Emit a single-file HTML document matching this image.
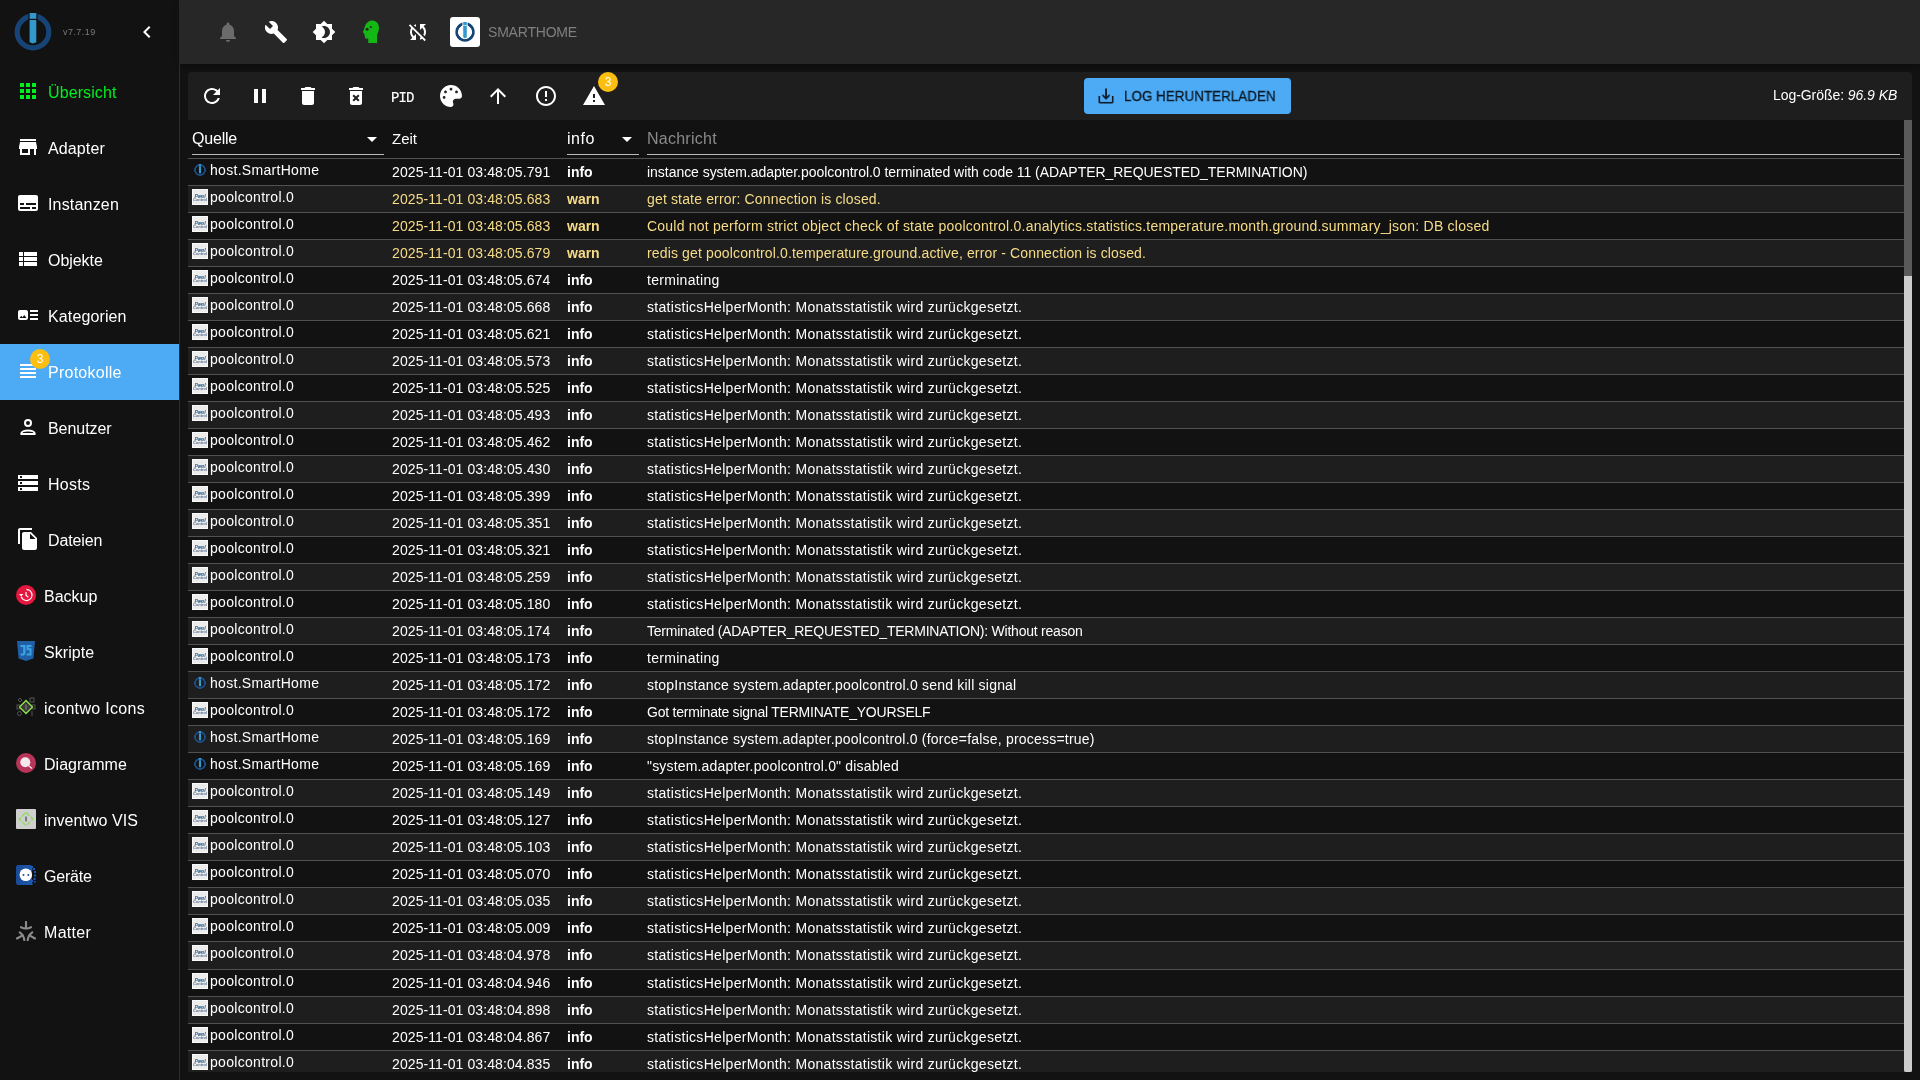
<!DOCTYPE html><html><head><meta charset="utf-8"><style>
*{box-sizing:border-box;margin:0;padding:0}
html,body{width:1920px;height:1080px;overflow:hidden;background:#121212;font-family:"Liberation Sans",sans-serif;color:#fff}
.abs{position:absolute}
#side{position:absolute;left:0;top:0;width:180px;height:1080px;background:#121212;border-right:1px solid #2e2e2e}
.item{position:absolute;left:0;width:179px;height:56px}
.item .ic{position:absolute;left:16px;top:15px;width:24px;height:24px}
.item .tx{position:absolute;left:48px;top:19px;font-size:16px;line-height:20px;white-space:nowrap}
.item.sel{background:#4dabf5}
#top{position:absolute;left:180px;top:0;width:1740px;height:64px;background:#272727;box-shadow:0 2px 4px -1px rgba(0,0,0,.2),0 4px 5px 0 rgba(0,0,0,.14),0 1px 10px 0 rgba(0,0,0,.12)}
.tb{position:absolute;top:20px;width:24px;height:24px}
#panel{position:absolute;left:188px;top:72px;width:1724px;height:1000px;background:#121212;overflow:hidden}
#toolbar{position:absolute;left:0;top:0;width:1724px;height:48px;background:#1e1e1e;border-radius:4px 4px 0 0}
.ti{position:absolute;top:12px;width:24px;height:24px}
#thead{position:absolute;left:0;top:48px;width:1716px;height:39px;border-bottom:1px solid #515151;background:#121212}
.hl{position:absolute;top:9px;font-size:16px;line-height:20px;white-space:nowrap}
.ul{position:absolute;top:34px;height:1px;background:#bababa}
.row{position:absolute;left:0;width:1716px;height:27px;border-bottom:1px solid #515151}
.row.e{background:#1e1e1e}
.c{position:absolute;font-size:14px;line-height:16px;white-space:nowrap}
.src{left:22px;top:3px;letter-spacing:0.3px}
.tm{left:204px;top:5px;letter-spacing:0.09px}
.lv{left:379px;top:5px;font-weight:bold}
.msg{left:459px;top:5px}
.w{color:#f7dc87}
.pi{position:absolute;left:4px;top:3px;width:16px;height:16px}
.hi{position:absolute;left:6px;top:5px;width:12px;height:12px}
svg{display:block}
body *{will-change:transform}
#sb{position:absolute;left:1716px;top:48px;width:8px;height:952px;background:#5a5a5a}
#thumb{position:absolute;left:0;top:156px;width:8px;height:796px;background:#cdcdcd;border-radius:0 0 2px 2px}
</style></head><body>
<div id="side">
<div class="abs" style="left:14px;top:13px;width:38px;height:38px"><svg width="38" height="38" viewBox="0 0 38 38"><circle cx="19" cy="19" r="15.8" fill="none" stroke="#164477" stroke-width="5.2"/><rect x="14.4" y="-1" width="9.2" height="10" fill="#121212"/><rect x="15.6" y="0" width="6.7" height="5.8" fill="#3399cc"/><path d="M15.6 7h6.7v22.2l-3.35 1.3-3.35-1.3z" fill="#3399cc"/></svg></div>
<div class="abs" style="left:63px;top:27px;font-size:9px;line-height:10px;letter-spacing:0.45px;color:#7a7a7a">v7.7.19</div>
<div class="abs" style="left:135px;top:20px"><svg width="24" height="24" viewBox="0 0 24 24" ><path fill="#fff" d="M15.41 7.41L14 6l-6 6 6 6 1.41-1.41L10.83 12z"/></svg></div>
<div class="item" style="top:64px"><div class="ic"><svg width="24" height="24" viewBox="0 0 24 24" ><path fill="#00f01e" d="M4 8h4V4H4v4zm6 12h4v-4h-4v4zm-6 0h4v-4H4v4zm0-6h4v-4H4v4zm6 0h4v-4h-4v4zm6-10v4h4V4h-4zm-6 4h4V4h-4v4zm6 6h4v-4h-4v4zm0 6h4v-4h-4v4z"/></svg></div><div class="tx" style="color:#00f01e;letter-spacing:0.1px">Übersicht</div>
</div>
<div class="item" style="top:120px"><div class="ic"><svg width="24" height="24" viewBox="0 0 24 24" ><path fill="#fff" d="M20 4H4v2h16V4zm1 10v-2l-1-5H4l-1 5v2h1v6h10v-6h4v6h2v-6h1zm-9 4H6v-4h6v4z"/></svg></div><div class="tx" style="color:#fff;letter-spacing:0.117px">Adapter</div>
</div>
<div class="item" style="top:176px"><div class="ic"><svg width="24" height="24" viewBox="0 0 24 24" ><path fill="#fff" d="M20 4H4c-1.1 0-2 .9-2 2v12c0 1.1.9 2 2 2h16c1.1 0 2-.9 2-2V6c0-1.1-.9-2-2-2zM4 12h4v2H4v-2zm10 6H4v-2h10v2zm6 0h-4v-2h4v2zm0-4H10v-2h10v2z"/></svg></div><div class="tx" style="color:#fff;letter-spacing:0.175px">Instanzen</div>
</div>
<div class="item" style="top:232px"><div class="ic"><svg width="24" height="24" viewBox="0 0 24 24" ><path fill="#fff" d="M3 14h4v-4H3v4zm0 5h4v-4H3v4zM3 9h4V5H3v4zm5 5h13v-4H8v4zm0 5h13v-4H8v4zM8 5v4h13V5H8z"/></svg></div><div class="tx" style="color:#fff;letter-spacing:-0.05px">Objekte</div>
</div>
<div class="item" style="top:288px"><div class="ic"><svg width="24" height="24" viewBox="0 0 24 24" ><path fill="#fff" d="M22 13h-8v-2h8v2zm0-6h-8v2h8V7zm-8 10h8v-2h-8v2zm-2-8v6c0 1.1-.9 2-2 2H4c-1.1 0-2-.9-2-2V9c0-1.1.9-2 2-2h6c1.1 0 2 .9 2 2zm-1.5 6l-2.25-3-1.75 2.26-1.25-1.51L3.5 15h7z"/></svg></div><div class="tx" style="color:#fff;letter-spacing:0.122px">Kategorien</div>
</div>
<div class="item sel" style="top:344px"><div class="ic"><svg width="24" height="24" viewBox="0 0 24 24" ><path fill="#fff" d="M4 15h16v-2H4v2zm0 4h16v-2H4v2zm0-8h16V9H4v2zm0-6v2h16V5H4z"/></svg></div><div class="tx" style="color:#fff;letter-spacing:0.256px">Protokolle</div>
<div class="abs" style="left:30px;top:5px;width:20px;height:20px;border-radius:10px;background:#fdbf0f;color:#fff;font-size:12px;line-height:20px;text-align:center">3</div>
</div>
<div class="item" style="top:400px"><div class="ic"><svg width="24" height="24" viewBox="0 0 24 24"><circle cx="12" cy="8" r="3" fill="none" stroke="#fff" stroke-width="2"/><path d="M5.2 19C5.2 16.9 8.5 15.6 12 15.6S18.8 16.9 18.8 19Z" fill="none" stroke="#fff" stroke-width="2" stroke-linejoin="round"/></svg></div><div class="tx" style="color:#fff;letter-spacing:-0.057px">Benutzer</div>
</div>
<div class="item" style="top:456px"><div class="ic"><svg width="24" height="24" viewBox="0 0 24 24" ><path fill="#fff" d="M2 20h20v-4H2v4zm2-3h2v2H4v-2zM2 4v4h20V4H2zm4 3H4V5h2v2zm-4 7h20v-4H2v4zm2-3h2v2H4v-2z"/></svg></div><div class="tx" style="color:#fff;letter-spacing:0.3px">Hosts</div>
</div>
<div class="item" style="top:512px"><div class="ic"><svg width="24" height="24" viewBox="0 0 24 24" ><path fill="#fff" d="M16 1H4c-1.1 0-2 .9-2 2v14h2V3h12V1zm-1 4l6 6v10c0 1.1-.9 2-2 2H7.99C6.89 23 6 22.1 6 21l.01-14c0-1.1.89-2 1.99-2h7zm-1 7h5.5L14 6.5V12z"/></svg></div><div class="tx" style="color:#fff;letter-spacing:-0.133px">Dateien</div>
</div>
<div class="item" style="top:568px"><div class="abs" style="left:16px;top:17px"><svg width="20" height="20" viewBox="0 0 20 20"><circle cx="10" cy="10" r="10" fill="#e5173f"/><path d="M10.5 4.5a5.5 5.5 0 1 1-5.2 7.3" fill="none" stroke="#fff" stroke-width="1.3"/><path d="M3 9l2.2 2.6L7.4 9z" fill="#fff"/><path d="M10 7v3.3l2.3 2" fill="none" stroke="#fff" stroke-width="1.2"/></svg></div><div class="tx" style="left:44px;color:#fff;letter-spacing:0.0px">Backup</div></div>
<div class="item" style="top:624px"><div class="abs" style="left:17px;top:17px"><svg width="18" height="20" viewBox="0 0 18 20"><path d="M0 0h18l-1.6 17.6L9 20l-7.4-2.4z" fill="#1f5fa6"/><path d="M3.5 4h5v8.5l-1.5 2H3.6v-2h2.6V6H3.5z" fill="#3ea3e2"/><path d="M14.5 4H9.6v5.2h3v3.3H9.6v2h4.6l.3-.5V7.3h-2.8V6h2.8z" fill="#3ea3e2"/></svg></div><div class="tx" style="left:44px;color:#fff;letter-spacing:0.067px">Skripte</div></div>
<div class="item" style="top:680px"><div class="abs" style="left:16px;top:17px"><svg width="20" height="20" viewBox="0 0 20 20"><g fill="none" stroke="#555" stroke-width="1"><path d="M2 3l2-2 2 2-2 2z"/><rect x="14" y="1" width="4" height="4"/><circle cx="3.5" cy="16.5" r="2"/><path d="M16 14v5"/><rect x="1" y="8" width="3" height="4"/><rect x="16" y="8" width="3" height="4"/></g><path d="M10 3.5l6.5 6.5-6.5 6.5-6.5-6.5z" fill="#3a3a3a" stroke="#8fe84a" stroke-width="1.3"/><rect x="9.3" y="7.5" width="1.4" height="5" fill="#777"/></svg></div><div class="tx" style="left:44px;color:#fff;letter-spacing:0.317px">icontwo Icons</div></div>
<div class="item" style="top:736px"><div class="abs" style="left:16px;top:17px"><svg width="20" height="20" viewBox="0 0 20 20"><circle cx="10" cy="10" r="10" fill="#b73558"/><circle cx="9.3" cy="9.3" r="5" fill="#f4e9ec"/><path d="M12.5 12.5l3.5 3" stroke="#f4e9ec" stroke-width="1.2"/></svg></div><div class="tx" style="left:44px;color:#fff;letter-spacing:0.012px">Diagramme</div></div>
<div class="item" style="top:792px"><div class="abs" style="left:16px;top:17px"><svg width="20" height="20" viewBox="0 0 20 20"><rect x="0" y="0" width="20" height="20" rx="1" fill="#cfcfcf"/><path d="M10 3.2l6.8 6.8-6.8 6.8-6.8-6.8z" fill="none" stroke="#8edb5a" stroke-width="1.3" stroke-dasharray="5 1.5"/><rect x="9.4" y="7.6" width="1.2" height="4.8" fill="#444"/></svg></div><div class="tx" style="left:44px;color:#fff;letter-spacing:0.045px">inventwo VIS</div></div>
<div class="item" style="top:848px"><div class="abs" style="left:16px;top:17px"><svg width="20" height="20" viewBox="0 0 20 20"><defs><linearGradient id="gd" x1="0" x2="1"><stop offset="0" stop-color="#1a4a94"/><stop offset="1" stop-color="#1d58b0"/></linearGradient></defs><rect x="0" y="0" width="16" height="20" rx="2" fill="url(#gd)"/><g fill="#1b5cc0"><rect x="15" y="1" width="2" height="2"/><rect x="17" y="3" width="2" height="2"/><rect x="15" y="4" width="1.5" height="1.5"/><rect x="18" y="6" width="2" height="2"/><rect x="18" y="9.5" width="2" height="2"/><rect x="17.5" y="13" width="2" height="2"/><rect x="15" y="15" width="2" height="2"/><rect x="18" y="16" width="1.6" height="1.6"/><rect x="14.5" y="18" width="2" height="2"/></g><circle cx="9.8" cy="9.8" r="6.3" fill="#fff"/><circle cx="7.5" cy="10" r="1" fill="#1d4f9e"/><circle cx="12.3" cy="10" r="1" fill="#1d4f9e"/></svg></div><div class="tx" style="left:44px;color:#fff;letter-spacing:-0.22px">Geräte</div></div>
<div class="item" style="top:904px"><div class="abs" style="left:16px;top:17px"><svg width="20" height="20" viewBox="0 0 20 20"><g fill="none" stroke="#8c8c8c" stroke-width="2.1" stroke-linecap="round"><path d="M10 0.8v6.5"/><path d="M5 6.2q5 2.6 10 0"/><path d="M1 17.5l5.6-3.2"/><path d="M8.3 19.5q-0.3-5.4-4.6-8.2"/><path d="M19 17.5l-5.6-3.2"/><path d="M11.7 19.5q0.3-5.4 4.6-8.2"/></g></svg></div><div class="tx" style="left:44px;color:#fff;letter-spacing:0.3px">Matter</div></div>
</div>
<div id="top">
<div class="tb" style="left:36px"><svg width="24" height="24" viewBox="0 0 24 24" ><path fill="#6b6b6b" d="M12 22c1.1 0 2-.9 2-2h-4c0 1.1.89 2 2 2zm6-6v-5c0-3.07-1.64-5.64-4.5-6.32V4c0-.83-.67-1.5-1.5-1.5s-1.5.67-1.5 1.5v.68C7.63 5.36 6 7.92 6 11v5l-2 2v1h16v-1l-2-2z"/></svg></div>
<div class="tb" style="left:84px"><svg width="24" height="24" viewBox="0 0 24 24" ><path fill="#fff" d="M22.7 19l-9.1-9.1c.9-2.3.4-5-1.5-6.9-2-2-5-2.4-7.4-1.3L9 6 6 9 1.6 4.7C.4 7.1.9 10.1 2.9 12.1c1.9 1.9 4.6 2.4 6.9 1.5l9.1 9.1c.4.4 1 .4 1.4 0l2.3-2.3c.5-.4.5-1.1.1-1.4z"/></svg></div>
<div class="tb" style="left:132px"><svg width="24" height="24" viewBox="0 0 24 24" ><path fill="#fff" d="M20 8.69V4h-4.69L12 .69 8.69 4H4v4.69L.69 12 4 15.31V20h4.69L12 23.31 15.31 20H20v-4.69L23.31 12 20 8.69zM12 18c-.89 0-1.74-.2-2.5-.55C11.56 16.5 13 14.42 13 12s-1.44-4.5-3.5-5.45C10.26 6.2 11.11 6 12 6c3.31 0 6 2.69 6 6s-2.69 6-6 6z"/></svg></div>
<div class="tb" style="left:180px"><svg width="24" height="24" viewBox="0 0 24 24"><path fill="#14b814" d="M2.9 11.9L4.4 8.2C5 4.6 7.8 1 11.7 0.6C14.6 0.5 17.2 2 18.3 4.6C19.3 6.8 19.2 10.6 17.9 12.9L17.1 14.6V22.9H8.3V18.8L6.2 18.6C5.4 18.5 4.9 18 4.9 17.3L4.8 15.2C4.3 14.6 4 14 4.1 13.4L3.1 12.6Z"/><circle cx="7.1" cy="9.3" r="1.5" fill="#272727"/><path d="M10.6 5.6l.5.7.8-.2-.3.8.5.7-.8.1-.3.8-.5-.7-.8.1.3-.8-.4-.7.8.1z" fill="#272727"/></svg></div>
<div class="tb" style="left:226px"><svg width="24" height="24" viewBox="0 0 24 24" ><path fill="#fff" d="M10 6.35V4.26c-.8.21-1.55.54-2.23.96l1.46 1.46c.25-.12.5-.24.77-.33zm-7.14-.94l2.36 2.36C4.45 8.99 4 10.440 4 12c0 2.21.91 4.2 2.36 5.64L4 20h6v-6l-2.24 2.240C6.68 15.15 6 13.66 6 12c0-1 .25-1.94.68-2.77l8.08 8.08c-.25.13-.5.25-.77.34v2.09c.8-.21 1.55-.54 2.23-.96l2.36 2.36 1.27-1.27L4.14 4.14 2.86 5.41zM20 4h-6v6l2.24-2.24C17.32 8.85 18 10.34 18 12c0 1-.25 1.94-.68 2.77l1.46 1.46C19.55 15.01 20 13.56 20 12c0-2.21-.91-4.2-2.36-5.64L20 4z"/></svg></div>
<div class="abs" style="left:270px;top:17px;width:30px;height:30px;background:#fff;border-radius:3px"><div class="abs" style="left:5px;top:5px"><svg width="20" height="20" viewBox="0 0 38 38"><circle cx="19" cy="19" r="15.8" fill="none" stroke="#164477" stroke-width="5.2"/><rect x="14.4" y="-1" width="9.2" height="10" fill="#fff"/><rect x="15.6" y="0" width="6.7" height="5.8" fill="#3399cc"/><path d="M15.6 7h6.7v22.2l-3.35 1.3-3.35-1.3z" fill="#3399cc"/></svg></div></div>
<div class="abs" style="left:308px;top:24px;font-size:14px;line-height:16px;color:#7f7f7f;letter-spacing:-0.2px">SMARTHOME</div>
</div>
<div id="panel"><div id="toolbar">
<div class="ti" style="left:12px"><svg width="24" height="24" viewBox="0 0 24 24" ><path fill="#fff" d="M17.65 6.35C16.2 4.9 14.21 4 12 4c-4.42 0-7.99 3.58-7.99 8s3.57 8 7.99 8c3.73 0 6.84-2.55 7.73-6h-2.080c-.82 2.33-3.04 4-5.65 4-3.31 0-6-2.69-6-6s2.69-6 6-6c1.66 0 3.14.69 4.22 1.78L13 11h7V4l-2.35 2.35z"/></svg></div>
<div class="ti" style="left:60px"><svg width="24" height="24" viewBox="0 0 24 24" ><path fill="#fff" d="M6 19h4V5H6v14zm8-14v14h4V5h-4z"/></svg></div>
<div class="ti" style="left:108px"><svg width="24" height="24" viewBox="0 0 24 24" ><path fill="#fff" d="M6 19c0 1.1.9 2 2 2h8c1.1 0 2-.9 2-2V7H6v12zM19 4h-3.5l-1-1h-5l-1 1H5v2h14V4z"/></svg></div>
<div class="ti" style="left:156px"><svg width="24" height="24" viewBox="0 0 24 24" ><path fill="#fff" d="M6 19c0 1.1.9 2 2 2h8c1.1 0 2-.9 2-2V7H6v12zm2.46-7.12l1.41-1.41L12 12.59l2.12-2.12 1.41 1.41L13.41 14l2.12 2.12-1.41 1.41L12 15.41l-2.12 2.12-1.41-1.41L10.59 14l-2.13-2.12zM15.5 4l-1-1h-5l-1 1H5v2h14V4z"/></svg></div>
<div class="abs" style="left:203px;top:18px;font-family:Liberation Mono,monospace;font-size:14px;letter-spacing:-0.9px;-webkit-text-stroke:0.2px #fff;line-height:16px;color:#fff">PID</div>
<div class="ti" style="left:252px;top:13px;width:22px;height:22px"><svg width="22" height="22" viewBox="0 0 512 512"><path fill="#fff" d="M204.3 5C104.9 24.4 24.8 104.3 5.2 203.4c-37 187 131.7 326.4 258.8 306.7 41.2-6.4 61.4-54.6 42.5-91.7-23.1-45.4 9.9-98.4 60.9-98.4h79.7c35.8 0 64.8-29.6 64.9-65.300C511.5 97.1 368.1-26.9 204.3 5zM96 320c-17.7 0-32-14.3-32-32s14.3-32 32-32 32 14.3 32 32-14.3 32-32 32zm32-128c-17.7 0-32-14.3-32-32s14.3-32 32-32 32 14.3 32 32-14.3 32-32 32zm128-64c-17.7 0-32-14.3-32-32s14.3-32 32-32 32 14.3 32 32-14.3 32-32 32zm128 64c-17.7 0-32-14.3-32-32s14.3-32 32-32 32 14.3 32 32-14.3 32-32 32z"/></svg></div>
<div class="ti" style="left:298px"><svg width="24" height="24" viewBox="0 0 24 24" ><path fill="#fff" d="M4 12l1.41 1.41L11 7.83V20h2V7.83l5.58 5.59L20 12l-8-8-8 8z"/></svg></div>
<div class="ti" style="left:346px"><svg width="24" height="24" viewBox="0 0 24 24" ><path fill="#fff" d="M11 15h2v2h-2zm0-8h2v6h-2zm.99-5C6.47 2 2 6.48 2 12s4.47 10 9.99 10C17.52 22 22 17.52 22 12S17.52 2 11.99 2zM12 20c-4.42 0-8-3.58-8-8s3.58-8 8-8 8 3.58 8 8-3.58 8-8 8z"/></svg></div>
<div class="ti" style="left:394px"><svg width="24" height="24" viewBox="0 0 24 24" ><path fill="#fff" d="M1 21h22L12 2 1 21zm12-3h-2v-2h2v2zm0-4h-2v-4h2v4z"/></svg></div>
<div class="abs" style="left:410px;top:0px;width:20px;height:20px;border-radius:10px;background:#fdbf0f;color:#fff;font-size:12px;line-height:20px;text-align:center">3</div>
<div class="abs" style="left:896px;top:6px;width:207px;height:36px;background:#4dabf5;border-radius:4px"><div class="abs" style="left:12px;top:8px"><svg width="20" height="20" viewBox="0 0 24 24" ><path fill="#0b1a26" d="M19 12v7H5v-7H3v7c0 1.1.9 2 2 2h14c1.1 0 2-.9 2-2v-7h-2zm-6 .67l2.59-2.58L17 11.5l-5 5-5-5 1.41-1.41L11 12.67V3h2z"/></svg></div><div class="abs" style="left:40px;top:10px;font-size:14px;line-height:16px;color:#0b1a26;letter-spacing:0.1px;-webkit-text-stroke:0.3px #0b1a26;transform:scaleX(0.95);transform-origin:0 0">LOG HERUNTERLADEN</div></div>
<div class="abs" style="right:15px;top:15px;font-size:14px;line-height:16px;color:#fff;letter-spacing:-0.06px">Log-Größe: <i>96.9 KB</i></div>
</div>
<div id="thead">
<div class="hl" style="left:4px;letter-spacing:-0.2px">Quelle</div>
<div class="abs" style="left:172px;top:7px"><svg width="24" height="24" viewBox="0 0 24 24" ><path fill="#fff" d="M7 10l5 5 5-5z"/></svg></div>
<div class="ul" style="left:4px;width:192px"></div>
<div class="hl" style="left:204px;font-size:15px">Zeit</div>
<div class="hl" style="left:379px;letter-spacing:0.5px">info</div>
<div class="abs" style="left:427px;top:7px"><svg width="24" height="24" viewBox="0 0 24 24" ><path fill="#fff" d="M7 10l5 5 5-5z"/></svg></div>
<div class="ul" style="left:379px;width:72px"></div>
<div class="hl" style="left:459px;color:#8a8a8a;letter-spacing:0.25px">Nachricht</div>
<div class="ul" style="left:459px;width:1253px"></div>
</div>
<div class="row" style="top:87px;height:27px"><div class="hi"><svg width="12" height="12" viewBox="0 0 38 38"><circle cx="19" cy="19" r="15.8" fill="none" stroke="#1b4f8a" stroke-width="5.2"/><rect x="14.4" y="-1" width="9.2" height="10" fill="transparent"/><rect x="15.6" y="0" width="6.7" height="5.8" fill="#3399cc"/><path d="M15.6 7h6.7v22.2l-3.35 1.3-3.35-1.3z" fill="#3399cc"/></svg></div><div class="c src">host.SmartHome</div><div class="c tm">2025-11-01 03:48:05.791</div><div class="c lv">info</div><div class="c msg" style="letter-spacing:-0.038px">instance system.adapter.poolcontrol.0 terminated with code 11 (ADAPTER_REQUESTED_TERMINATION)</div></div>
<div class="row e" style="top:114px;height:27px"><div class="pi"><svg width="16" height="16" viewBox="0 0 16 16"><rect x="0" y="0" width="16" height="16" fill="#fafafa"/><rect x="1" y="1" width="14" height="14" fill="#ececec"/><text x="8" y="8.6" font-family="Liberation Sans" font-weight="bold" font-size="5.2" fill="#4a6282" text-anchor="middle" font-style="italic">Pool</text><text x="8" y="11.8" font-family="Liberation Sans" font-weight="bold" font-size="4" fill="#5a7090" text-anchor="middle" font-style="italic">Control</text><circle cx="7.6" cy="7.2" r="0.9" fill="#2b8fc4"/><circle cx="9.6" cy="7.2" r="0.9" fill="#2b8fc4"/></svg></div><div class="c src">poolcontrol.0</div><div class="c tm w">2025-11-01 03:48:05.683</div><div class="c lv w">warn</div><div class="c msg w" style="letter-spacing:0.154px">get state error: Connection is closed.</div></div>
<div class="row" style="top:141px;height:27px"><div class="pi"><svg width="16" height="16" viewBox="0 0 16 16"><rect x="0" y="0" width="16" height="16" fill="#fafafa"/><rect x="1" y="1" width="14" height="14" fill="#ececec"/><text x="8" y="8.6" font-family="Liberation Sans" font-weight="bold" font-size="5.2" fill="#4a6282" text-anchor="middle" font-style="italic">Pool</text><text x="8" y="11.8" font-family="Liberation Sans" font-weight="bold" font-size="4" fill="#5a7090" text-anchor="middle" font-style="italic">Control</text><circle cx="7.6" cy="7.2" r="0.9" fill="#2b8fc4"/><circle cx="9.6" cy="7.2" r="0.9" fill="#2b8fc4"/></svg></div><div class="c src">poolcontrol.0</div><div class="c tm w">2025-11-01 03:48:05.683</div><div class="c lv w">warn</div><div class="c msg w" style="letter-spacing:0.225px">Could not perform strict object check of state poolcontrol.0.analytics.statistics.temperature.month.ground.summary_json: DB closed</div></div>
<div class="row e" style="top:168px;height:27px"><div class="pi"><svg width="16" height="16" viewBox="0 0 16 16"><rect x="0" y="0" width="16" height="16" fill="#fafafa"/><rect x="1" y="1" width="14" height="14" fill="#ececec"/><text x="8" y="8.6" font-family="Liberation Sans" font-weight="bold" font-size="5.2" fill="#4a6282" text-anchor="middle" font-style="italic">Pool</text><text x="8" y="11.8" font-family="Liberation Sans" font-weight="bold" font-size="4" fill="#5a7090" text-anchor="middle" font-style="italic">Control</text><circle cx="7.6" cy="7.2" r="0.9" fill="#2b8fc4"/><circle cx="9.6" cy="7.2" r="0.9" fill="#2b8fc4"/></svg></div><div class="c src">poolcontrol.0</div><div class="c tm w">2025-11-01 03:48:05.679</div><div class="c lv w">warn</div><div class="c msg w" style="letter-spacing:0.139px">redis get poolcontrol.0.temperature.ground.active, error - Connection is closed.</div></div>
<div class="row" style="top:195px;height:27px"><div class="pi"><svg width="16" height="16" viewBox="0 0 16 16"><rect x="0" y="0" width="16" height="16" fill="#fafafa"/><rect x="1" y="1" width="14" height="14" fill="#ececec"/><text x="8" y="8.6" font-family="Liberation Sans" font-weight="bold" font-size="5.2" fill="#4a6282" text-anchor="middle" font-style="italic">Pool</text><text x="8" y="11.8" font-family="Liberation Sans" font-weight="bold" font-size="4" fill="#5a7090" text-anchor="middle" font-style="italic">Control</text><circle cx="7.6" cy="7.2" r="0.9" fill="#2b8fc4"/><circle cx="9.6" cy="7.2" r="0.9" fill="#2b8fc4"/></svg></div><div class="c src">poolcontrol.0</div><div class="c tm">2025-11-01 03:48:05.674</div><div class="c lv">info</div><div class="c msg" style="letter-spacing:0.300px">terminating</div></div>
<div class="row e" style="top:222px;height:27px"><div class="pi"><svg width="16" height="16" viewBox="0 0 16 16"><rect x="0" y="0" width="16" height="16" fill="#fafafa"/><rect x="1" y="1" width="14" height="14" fill="#ececec"/><text x="8" y="8.6" font-family="Liberation Sans" font-weight="bold" font-size="5.2" fill="#4a6282" text-anchor="middle" font-style="italic">Pool</text><text x="8" y="11.8" font-family="Liberation Sans" font-weight="bold" font-size="4" fill="#5a7090" text-anchor="middle" font-style="italic">Control</text><circle cx="7.6" cy="7.2" r="0.9" fill="#2b8fc4"/><circle cx="9.6" cy="7.2" r="0.9" fill="#2b8fc4"/></svg></div><div class="c src">poolcontrol.0</div><div class="c tm">2025-11-01 03:48:05.668</div><div class="c lv">info</div><div class="c msg" style="letter-spacing:0.298px">statisticsHelperMonth: Monatsstatistik wird zurückgesetzt.</div></div>
<div class="row" style="top:249px;height:27px"><div class="pi"><svg width="16" height="16" viewBox="0 0 16 16"><rect x="0" y="0" width="16" height="16" fill="#fafafa"/><rect x="1" y="1" width="14" height="14" fill="#ececec"/><text x="8" y="8.6" font-family="Liberation Sans" font-weight="bold" font-size="5.2" fill="#4a6282" text-anchor="middle" font-style="italic">Pool</text><text x="8" y="11.8" font-family="Liberation Sans" font-weight="bold" font-size="4" fill="#5a7090" text-anchor="middle" font-style="italic">Control</text><circle cx="7.6" cy="7.2" r="0.9" fill="#2b8fc4"/><circle cx="9.6" cy="7.2" r="0.9" fill="#2b8fc4"/></svg></div><div class="c src">poolcontrol.0</div><div class="c tm">2025-11-01 03:48:05.621</div><div class="c lv">info</div><div class="c msg" style="letter-spacing:0.298px">statisticsHelperMonth: Monatsstatistik wird zurückgesetzt.</div></div>
<div class="row e" style="top:276px;height:27px"><div class="pi"><svg width="16" height="16" viewBox="0 0 16 16"><rect x="0" y="0" width="16" height="16" fill="#fafafa"/><rect x="1" y="1" width="14" height="14" fill="#ececec"/><text x="8" y="8.6" font-family="Liberation Sans" font-weight="bold" font-size="5.2" fill="#4a6282" text-anchor="middle" font-style="italic">Pool</text><text x="8" y="11.8" font-family="Liberation Sans" font-weight="bold" font-size="4" fill="#5a7090" text-anchor="middle" font-style="italic">Control</text><circle cx="7.6" cy="7.2" r="0.9" fill="#2b8fc4"/><circle cx="9.6" cy="7.2" r="0.9" fill="#2b8fc4"/></svg></div><div class="c src">poolcontrol.0</div><div class="c tm">2025-11-01 03:48:05.573</div><div class="c lv">info</div><div class="c msg" style="letter-spacing:0.298px">statisticsHelperMonth: Monatsstatistik wird zurückgesetzt.</div></div>
<div class="row" style="top:303px;height:27px"><div class="pi"><svg width="16" height="16" viewBox="0 0 16 16"><rect x="0" y="0" width="16" height="16" fill="#fafafa"/><rect x="1" y="1" width="14" height="14" fill="#ececec"/><text x="8" y="8.6" font-family="Liberation Sans" font-weight="bold" font-size="5.2" fill="#4a6282" text-anchor="middle" font-style="italic">Pool</text><text x="8" y="11.8" font-family="Liberation Sans" font-weight="bold" font-size="4" fill="#5a7090" text-anchor="middle" font-style="italic">Control</text><circle cx="7.6" cy="7.2" r="0.9" fill="#2b8fc4"/><circle cx="9.6" cy="7.2" r="0.9" fill="#2b8fc4"/></svg></div><div class="c src">poolcontrol.0</div><div class="c tm">2025-11-01 03:48:05.525</div><div class="c lv">info</div><div class="c msg" style="letter-spacing:0.298px">statisticsHelperMonth: Monatsstatistik wird zurückgesetzt.</div></div>
<div class="row e" style="top:330px;height:27px"><div class="pi"><svg width="16" height="16" viewBox="0 0 16 16"><rect x="0" y="0" width="16" height="16" fill="#fafafa"/><rect x="1" y="1" width="14" height="14" fill="#ececec"/><text x="8" y="8.6" font-family="Liberation Sans" font-weight="bold" font-size="5.2" fill="#4a6282" text-anchor="middle" font-style="italic">Pool</text><text x="8" y="11.8" font-family="Liberation Sans" font-weight="bold" font-size="4" fill="#5a7090" text-anchor="middle" font-style="italic">Control</text><circle cx="7.6" cy="7.2" r="0.9" fill="#2b8fc4"/><circle cx="9.6" cy="7.2" r="0.9" fill="#2b8fc4"/></svg></div><div class="c src">poolcontrol.0</div><div class="c tm">2025-11-01 03:48:05.493</div><div class="c lv">info</div><div class="c msg" style="letter-spacing:0.298px">statisticsHelperMonth: Monatsstatistik wird zurückgesetzt.</div></div>
<div class="row" style="top:357px;height:27px"><div class="pi"><svg width="16" height="16" viewBox="0 0 16 16"><rect x="0" y="0" width="16" height="16" fill="#fafafa"/><rect x="1" y="1" width="14" height="14" fill="#ececec"/><text x="8" y="8.6" font-family="Liberation Sans" font-weight="bold" font-size="5.2" fill="#4a6282" text-anchor="middle" font-style="italic">Pool</text><text x="8" y="11.8" font-family="Liberation Sans" font-weight="bold" font-size="4" fill="#5a7090" text-anchor="middle" font-style="italic">Control</text><circle cx="7.6" cy="7.2" r="0.9" fill="#2b8fc4"/><circle cx="9.6" cy="7.2" r="0.9" fill="#2b8fc4"/></svg></div><div class="c src">poolcontrol.0</div><div class="c tm">2025-11-01 03:48:05.462</div><div class="c lv">info</div><div class="c msg" style="letter-spacing:0.298px">statisticsHelperMonth: Monatsstatistik wird zurückgesetzt.</div></div>
<div class="row e" style="top:384px;height:27px"><div class="pi"><svg width="16" height="16" viewBox="0 0 16 16"><rect x="0" y="0" width="16" height="16" fill="#fafafa"/><rect x="1" y="1" width="14" height="14" fill="#ececec"/><text x="8" y="8.6" font-family="Liberation Sans" font-weight="bold" font-size="5.2" fill="#4a6282" text-anchor="middle" font-style="italic">Pool</text><text x="8" y="11.8" font-family="Liberation Sans" font-weight="bold" font-size="4" fill="#5a7090" text-anchor="middle" font-style="italic">Control</text><circle cx="7.6" cy="7.2" r="0.9" fill="#2b8fc4"/><circle cx="9.6" cy="7.2" r="0.9" fill="#2b8fc4"/></svg></div><div class="c src">poolcontrol.0</div><div class="c tm">2025-11-01 03:48:05.430</div><div class="c lv">info</div><div class="c msg" style="letter-spacing:0.298px">statisticsHelperMonth: Monatsstatistik wird zurückgesetzt.</div></div>
<div class="row" style="top:411px;height:27px"><div class="pi"><svg width="16" height="16" viewBox="0 0 16 16"><rect x="0" y="0" width="16" height="16" fill="#fafafa"/><rect x="1" y="1" width="14" height="14" fill="#ececec"/><text x="8" y="8.6" font-family="Liberation Sans" font-weight="bold" font-size="5.2" fill="#4a6282" text-anchor="middle" font-style="italic">Pool</text><text x="8" y="11.8" font-family="Liberation Sans" font-weight="bold" font-size="4" fill="#5a7090" text-anchor="middle" font-style="italic">Control</text><circle cx="7.6" cy="7.2" r="0.9" fill="#2b8fc4"/><circle cx="9.6" cy="7.2" r="0.9" fill="#2b8fc4"/></svg></div><div class="c src">poolcontrol.0</div><div class="c tm">2025-11-01 03:48:05.399</div><div class="c lv">info</div><div class="c msg" style="letter-spacing:0.298px">statisticsHelperMonth: Monatsstatistik wird zurückgesetzt.</div></div>
<div class="row e" style="top:438px;height:27px"><div class="pi"><svg width="16" height="16" viewBox="0 0 16 16"><rect x="0" y="0" width="16" height="16" fill="#fafafa"/><rect x="1" y="1" width="14" height="14" fill="#ececec"/><text x="8" y="8.6" font-family="Liberation Sans" font-weight="bold" font-size="5.2" fill="#4a6282" text-anchor="middle" font-style="italic">Pool</text><text x="8" y="11.8" font-family="Liberation Sans" font-weight="bold" font-size="4" fill="#5a7090" text-anchor="middle" font-style="italic">Control</text><circle cx="7.6" cy="7.2" r="0.9" fill="#2b8fc4"/><circle cx="9.6" cy="7.2" r="0.9" fill="#2b8fc4"/></svg></div><div class="c src">poolcontrol.0</div><div class="c tm">2025-11-01 03:48:05.351</div><div class="c lv">info</div><div class="c msg" style="letter-spacing:0.298px">statisticsHelperMonth: Monatsstatistik wird zurückgesetzt.</div></div>
<div class="row" style="top:465px;height:27px"><div class="pi"><svg width="16" height="16" viewBox="0 0 16 16"><rect x="0" y="0" width="16" height="16" fill="#fafafa"/><rect x="1" y="1" width="14" height="14" fill="#ececec"/><text x="8" y="8.6" font-family="Liberation Sans" font-weight="bold" font-size="5.2" fill="#4a6282" text-anchor="middle" font-style="italic">Pool</text><text x="8" y="11.8" font-family="Liberation Sans" font-weight="bold" font-size="4" fill="#5a7090" text-anchor="middle" font-style="italic">Control</text><circle cx="7.6" cy="7.2" r="0.9" fill="#2b8fc4"/><circle cx="9.6" cy="7.2" r="0.9" fill="#2b8fc4"/></svg></div><div class="c src">poolcontrol.0</div><div class="c tm">2025-11-01 03:48:05.321</div><div class="c lv">info</div><div class="c msg" style="letter-spacing:0.298px">statisticsHelperMonth: Monatsstatistik wird zurückgesetzt.</div></div>
<div class="row e" style="top:492px;height:27px"><div class="pi"><svg width="16" height="16" viewBox="0 0 16 16"><rect x="0" y="0" width="16" height="16" fill="#fafafa"/><rect x="1" y="1" width="14" height="14" fill="#ececec"/><text x="8" y="8.6" font-family="Liberation Sans" font-weight="bold" font-size="5.2" fill="#4a6282" text-anchor="middle" font-style="italic">Pool</text><text x="8" y="11.8" font-family="Liberation Sans" font-weight="bold" font-size="4" fill="#5a7090" text-anchor="middle" font-style="italic">Control</text><circle cx="7.6" cy="7.2" r="0.9" fill="#2b8fc4"/><circle cx="9.6" cy="7.2" r="0.9" fill="#2b8fc4"/></svg></div><div class="c src">poolcontrol.0</div><div class="c tm">2025-11-01 03:48:05.259</div><div class="c lv">info</div><div class="c msg" style="letter-spacing:0.298px">statisticsHelperMonth: Monatsstatistik wird zurückgesetzt.</div></div>
<div class="row" style="top:519px;height:27px"><div class="pi"><svg width="16" height="16" viewBox="0 0 16 16"><rect x="0" y="0" width="16" height="16" fill="#fafafa"/><rect x="1" y="1" width="14" height="14" fill="#ececec"/><text x="8" y="8.6" font-family="Liberation Sans" font-weight="bold" font-size="5.2" fill="#4a6282" text-anchor="middle" font-style="italic">Pool</text><text x="8" y="11.8" font-family="Liberation Sans" font-weight="bold" font-size="4" fill="#5a7090" text-anchor="middle" font-style="italic">Control</text><circle cx="7.6" cy="7.2" r="0.9" fill="#2b8fc4"/><circle cx="9.6" cy="7.2" r="0.9" fill="#2b8fc4"/></svg></div><div class="c src">poolcontrol.0</div><div class="c tm">2025-11-01 03:48:05.180</div><div class="c lv">info</div><div class="c msg" style="letter-spacing:0.298px">statisticsHelperMonth: Monatsstatistik wird zurückgesetzt.</div></div>
<div class="row e" style="top:546px;height:27px"><div class="pi"><svg width="16" height="16" viewBox="0 0 16 16"><rect x="0" y="0" width="16" height="16" fill="#fafafa"/><rect x="1" y="1" width="14" height="14" fill="#ececec"/><text x="8" y="8.6" font-family="Liberation Sans" font-weight="bold" font-size="5.2" fill="#4a6282" text-anchor="middle" font-style="italic">Pool</text><text x="8" y="11.8" font-family="Liberation Sans" font-weight="bold" font-size="4" fill="#5a7090" text-anchor="middle" font-style="italic">Control</text><circle cx="7.6" cy="7.2" r="0.9" fill="#2b8fc4"/><circle cx="9.6" cy="7.2" r="0.9" fill="#2b8fc4"/></svg></div><div class="c src">poolcontrol.0</div><div class="c tm">2025-11-01 03:48:05.174</div><div class="c lv">info</div><div class="c msg" style="letter-spacing:-0.225px">Terminated (ADAPTER_REQUESTED_TERMINATION): Without reason</div></div>
<div class="row" style="top:573px;height:27px"><div class="pi"><svg width="16" height="16" viewBox="0 0 16 16"><rect x="0" y="0" width="16" height="16" fill="#fafafa"/><rect x="1" y="1" width="14" height="14" fill="#ececec"/><text x="8" y="8.6" font-family="Liberation Sans" font-weight="bold" font-size="5.2" fill="#4a6282" text-anchor="middle" font-style="italic">Pool</text><text x="8" y="11.8" font-family="Liberation Sans" font-weight="bold" font-size="4" fill="#5a7090" text-anchor="middle" font-style="italic">Control</text><circle cx="7.6" cy="7.2" r="0.9" fill="#2b8fc4"/><circle cx="9.6" cy="7.2" r="0.9" fill="#2b8fc4"/></svg></div><div class="c src">poolcontrol.0</div><div class="c tm">2025-11-01 03:48:05.173</div><div class="c lv">info</div><div class="c msg" style="letter-spacing:0.300px">terminating</div></div>
<div class="row e" style="top:600px;height:27px"><div class="hi"><svg width="12" height="12" viewBox="0 0 38 38"><circle cx="19" cy="19" r="15.8" fill="none" stroke="#1b4f8a" stroke-width="5.2"/><rect x="14.4" y="-1" width="9.2" height="10" fill="transparent"/><rect x="15.6" y="0" width="6.7" height="5.8" fill="#3399cc"/><path d="M15.6 7h6.7v22.2l-3.35 1.3-3.35-1.3z" fill="#3399cc"/></svg></div><div class="c src">host.SmartHome</div><div class="c tm">2025-11-01 03:48:05.172</div><div class="c lv">info</div><div class="c msg" style="letter-spacing:0.211px">stopInstance system.adapter.poolcontrol.0 send kill signal</div></div>
<div class="row" style="top:627px;height:27px"><div class="pi"><svg width="16" height="16" viewBox="0 0 16 16"><rect x="0" y="0" width="16" height="16" fill="#fafafa"/><rect x="1" y="1" width="14" height="14" fill="#ececec"/><text x="8" y="8.6" font-family="Liberation Sans" font-weight="bold" font-size="5.2" fill="#4a6282" text-anchor="middle" font-style="italic">Pool</text><text x="8" y="11.8" font-family="Liberation Sans" font-weight="bold" font-size="4" fill="#5a7090" text-anchor="middle" font-style="italic">Control</text><circle cx="7.6" cy="7.2" r="0.9" fill="#2b8fc4"/><circle cx="9.6" cy="7.2" r="0.9" fill="#2b8fc4"/></svg></div><div class="c src">poolcontrol.0</div><div class="c tm">2025-11-01 03:48:05.172</div><div class="c lv">info</div><div class="c msg" style="letter-spacing:-0.221px">Got terminate signal TERMINATE_YOURSELF</div></div>
<div class="row e" style="top:654px;height:27px"><div class="hi"><svg width="12" height="12" viewBox="0 0 38 38"><circle cx="19" cy="19" r="15.8" fill="none" stroke="#1b4f8a" stroke-width="5.2"/><rect x="14.4" y="-1" width="9.2" height="10" fill="transparent"/><rect x="15.6" y="0" width="6.7" height="5.8" fill="#3399cc"/><path d="M15.6 7h6.7v22.2l-3.35 1.3-3.35-1.3z" fill="#3399cc"/></svg></div><div class="c src">host.SmartHome</div><div class="c tm">2025-11-01 03:48:05.169</div><div class="c lv">info</div><div class="c msg" style="letter-spacing:0.206px">stopInstance system.adapter.poolcontrol.0 (force=false, process=true)</div></div>
<div class="row" style="top:681px;height:27px"><div class="hi"><svg width="12" height="12" viewBox="0 0 38 38"><circle cx="19" cy="19" r="15.8" fill="none" stroke="#1b4f8a" stroke-width="5.2"/><rect x="14.4" y="-1" width="9.2" height="10" fill="transparent"/><rect x="15.6" y="0" width="6.7" height="5.8" fill="#3399cc"/><path d="M15.6 7h6.7v22.2l-3.35 1.3-3.35-1.3z" fill="#3399cc"/></svg></div><div class="c src">host.SmartHome</div><div class="c tm">2025-11-01 03:48:05.169</div><div class="c lv">info</div><div class="c msg" style="letter-spacing:0.178px">&quot;system.adapter.poolcontrol.0&quot; disabled</div></div>
<div class="row e" style="top:708px;height:27px"><div class="pi"><svg width="16" height="16" viewBox="0 0 16 16"><rect x="0" y="0" width="16" height="16" fill="#fafafa"/><rect x="1" y="1" width="14" height="14" fill="#ececec"/><text x="8" y="8.6" font-family="Liberation Sans" font-weight="bold" font-size="5.2" fill="#4a6282" text-anchor="middle" font-style="italic">Pool</text><text x="8" y="11.8" font-family="Liberation Sans" font-weight="bold" font-size="4" fill="#5a7090" text-anchor="middle" font-style="italic">Control</text><circle cx="7.6" cy="7.2" r="0.9" fill="#2b8fc4"/><circle cx="9.6" cy="7.2" r="0.9" fill="#2b8fc4"/></svg></div><div class="c src">poolcontrol.0</div><div class="c tm">2025-11-01 03:48:05.149</div><div class="c lv">info</div><div class="c msg" style="letter-spacing:0.298px">statisticsHelperMonth: Monatsstatistik wird zurückgesetzt.</div></div>
<div class="row" style="top:735px;height:27px"><div class="pi"><svg width="16" height="16" viewBox="0 0 16 16"><rect x="0" y="0" width="16" height="16" fill="#fafafa"/><rect x="1" y="1" width="14" height="14" fill="#ececec"/><text x="8" y="8.6" font-family="Liberation Sans" font-weight="bold" font-size="5.2" fill="#4a6282" text-anchor="middle" font-style="italic">Pool</text><text x="8" y="11.8" font-family="Liberation Sans" font-weight="bold" font-size="4" fill="#5a7090" text-anchor="middle" font-style="italic">Control</text><circle cx="7.6" cy="7.2" r="0.9" fill="#2b8fc4"/><circle cx="9.6" cy="7.2" r="0.9" fill="#2b8fc4"/></svg></div><div class="c src">poolcontrol.0</div><div class="c tm">2025-11-01 03:48:05.127</div><div class="c lv">info</div><div class="c msg" style="letter-spacing:0.298px">statisticsHelperMonth: Monatsstatistik wird zurückgesetzt.</div></div>
<div class="row e" style="top:762px;height:27px"><div class="pi"><svg width="16" height="16" viewBox="0 0 16 16"><rect x="0" y="0" width="16" height="16" fill="#fafafa"/><rect x="1" y="1" width="14" height="14" fill="#ececec"/><text x="8" y="8.6" font-family="Liberation Sans" font-weight="bold" font-size="5.2" fill="#4a6282" text-anchor="middle" font-style="italic">Pool</text><text x="8" y="11.8" font-family="Liberation Sans" font-weight="bold" font-size="4" fill="#5a7090" text-anchor="middle" font-style="italic">Control</text><circle cx="7.6" cy="7.2" r="0.9" fill="#2b8fc4"/><circle cx="9.6" cy="7.2" r="0.9" fill="#2b8fc4"/></svg></div><div class="c src">poolcontrol.0</div><div class="c tm">2025-11-01 03:48:05.103</div><div class="c lv">info</div><div class="c msg" style="letter-spacing:0.298px">statisticsHelperMonth: Monatsstatistik wird zurückgesetzt.</div></div>
<div class="row" style="top:789px;height:27px"><div class="pi"><svg width="16" height="16" viewBox="0 0 16 16"><rect x="0" y="0" width="16" height="16" fill="#fafafa"/><rect x="1" y="1" width="14" height="14" fill="#ececec"/><text x="8" y="8.6" font-family="Liberation Sans" font-weight="bold" font-size="5.2" fill="#4a6282" text-anchor="middle" font-style="italic">Pool</text><text x="8" y="11.8" font-family="Liberation Sans" font-weight="bold" font-size="4" fill="#5a7090" text-anchor="middle" font-style="italic">Control</text><circle cx="7.6" cy="7.2" r="0.9" fill="#2b8fc4"/><circle cx="9.6" cy="7.2" r="0.9" fill="#2b8fc4"/></svg></div><div class="c src">poolcontrol.0</div><div class="c tm">2025-11-01 03:48:05.070</div><div class="c lv">info</div><div class="c msg" style="letter-spacing:0.298px">statisticsHelperMonth: Monatsstatistik wird zurückgesetzt.</div></div>
<div class="row e" style="top:816px;height:27px"><div class="pi"><svg width="16" height="16" viewBox="0 0 16 16"><rect x="0" y="0" width="16" height="16" fill="#fafafa"/><rect x="1" y="1" width="14" height="14" fill="#ececec"/><text x="8" y="8.6" font-family="Liberation Sans" font-weight="bold" font-size="5.2" fill="#4a6282" text-anchor="middle" font-style="italic">Pool</text><text x="8" y="11.8" font-family="Liberation Sans" font-weight="bold" font-size="4" fill="#5a7090" text-anchor="middle" font-style="italic">Control</text><circle cx="7.6" cy="7.2" r="0.9" fill="#2b8fc4"/><circle cx="9.6" cy="7.2" r="0.9" fill="#2b8fc4"/></svg></div><div class="c src">poolcontrol.0</div><div class="c tm">2025-11-01 03:48:05.035</div><div class="c lv">info</div><div class="c msg" style="letter-spacing:0.298px">statisticsHelperMonth: Monatsstatistik wird zurückgesetzt.</div></div>
<div class="row" style="top:843px;height:27px"><div class="pi"><svg width="16" height="16" viewBox="0 0 16 16"><rect x="0" y="0" width="16" height="16" fill="#fafafa"/><rect x="1" y="1" width="14" height="14" fill="#ececec"/><text x="8" y="8.6" font-family="Liberation Sans" font-weight="bold" font-size="5.2" fill="#4a6282" text-anchor="middle" font-style="italic">Pool</text><text x="8" y="11.8" font-family="Liberation Sans" font-weight="bold" font-size="4" fill="#5a7090" text-anchor="middle" font-style="italic">Control</text><circle cx="7.6" cy="7.2" r="0.9" fill="#2b8fc4"/><circle cx="9.6" cy="7.2" r="0.9" fill="#2b8fc4"/></svg></div><div class="c src">poolcontrol.0</div><div class="c tm">2025-11-01 03:48:05.009</div><div class="c lv">info</div><div class="c msg" style="letter-spacing:0.298px">statisticsHelperMonth: Monatsstatistik wird zurückgesetzt.</div></div>
<div class="row e" style="top:870px;height:28px"><div class="pi"><svg width="16" height="16" viewBox="0 0 16 16"><rect x="0" y="0" width="16" height="16" fill="#fafafa"/><rect x="1" y="1" width="14" height="14" fill="#ececec"/><text x="8" y="8.6" font-family="Liberation Sans" font-weight="bold" font-size="5.2" fill="#4a6282" text-anchor="middle" font-style="italic">Pool</text><text x="8" y="11.8" font-family="Liberation Sans" font-weight="bold" font-size="4" fill="#5a7090" text-anchor="middle" font-style="italic">Control</text><circle cx="7.6" cy="7.2" r="0.9" fill="#2b8fc4"/><circle cx="9.6" cy="7.2" r="0.9" fill="#2b8fc4"/></svg></div><div class="c src">poolcontrol.0</div><div class="c tm">2025-11-01 03:48:04.978</div><div class="c lv">info</div><div class="c msg" style="letter-spacing:0.298px">statisticsHelperMonth: Monatsstatistik wird zurückgesetzt.</div></div>
<div class="row" style="top:898px;height:27px"><div class="pi"><svg width="16" height="16" viewBox="0 0 16 16"><rect x="0" y="0" width="16" height="16" fill="#fafafa"/><rect x="1" y="1" width="14" height="14" fill="#ececec"/><text x="8" y="8.6" font-family="Liberation Sans" font-weight="bold" font-size="5.2" fill="#4a6282" text-anchor="middle" font-style="italic">Pool</text><text x="8" y="11.8" font-family="Liberation Sans" font-weight="bold" font-size="4" fill="#5a7090" text-anchor="middle" font-style="italic">Control</text><circle cx="7.6" cy="7.2" r="0.9" fill="#2b8fc4"/><circle cx="9.6" cy="7.2" r="0.9" fill="#2b8fc4"/></svg></div><div class="c src">poolcontrol.0</div><div class="c tm">2025-11-01 03:48:04.946</div><div class="c lv">info</div><div class="c msg" style="letter-spacing:0.298px">statisticsHelperMonth: Monatsstatistik wird zurückgesetzt.</div></div>
<div class="row e" style="top:925px;height:27px"><div class="pi"><svg width="16" height="16" viewBox="0 0 16 16"><rect x="0" y="0" width="16" height="16" fill="#fafafa"/><rect x="1" y="1" width="14" height="14" fill="#ececec"/><text x="8" y="8.6" font-family="Liberation Sans" font-weight="bold" font-size="5.2" fill="#4a6282" text-anchor="middle" font-style="italic">Pool</text><text x="8" y="11.8" font-family="Liberation Sans" font-weight="bold" font-size="4" fill="#5a7090" text-anchor="middle" font-style="italic">Control</text><circle cx="7.6" cy="7.2" r="0.9" fill="#2b8fc4"/><circle cx="9.6" cy="7.2" r="0.9" fill="#2b8fc4"/></svg></div><div class="c src">poolcontrol.0</div><div class="c tm">2025-11-01 03:48:04.898</div><div class="c lv">info</div><div class="c msg" style="letter-spacing:0.298px">statisticsHelperMonth: Monatsstatistik wird zurückgesetzt.</div></div>
<div class="row" style="top:952px;height:27px"><div class="pi"><svg width="16" height="16" viewBox="0 0 16 16"><rect x="0" y="0" width="16" height="16" fill="#fafafa"/><rect x="1" y="1" width="14" height="14" fill="#ececec"/><text x="8" y="8.6" font-family="Liberation Sans" font-weight="bold" font-size="5.2" fill="#4a6282" text-anchor="middle" font-style="italic">Pool</text><text x="8" y="11.8" font-family="Liberation Sans" font-weight="bold" font-size="4" fill="#5a7090" text-anchor="middle" font-style="italic">Control</text><circle cx="7.6" cy="7.2" r="0.9" fill="#2b8fc4"/><circle cx="9.6" cy="7.2" r="0.9" fill="#2b8fc4"/></svg></div><div class="c src">poolcontrol.0</div><div class="c tm">2025-11-01 03:48:04.867</div><div class="c lv">info</div><div class="c msg" style="letter-spacing:0.298px">statisticsHelperMonth: Monatsstatistik wird zurückgesetzt.</div></div>
<div class="row e" style="top:979px;height:27px"><div class="pi"><svg width="16" height="16" viewBox="0 0 16 16"><rect x="0" y="0" width="16" height="16" fill="#fafafa"/><rect x="1" y="1" width="14" height="14" fill="#ececec"/><text x="8" y="8.6" font-family="Liberation Sans" font-weight="bold" font-size="5.2" fill="#4a6282" text-anchor="middle" font-style="italic">Pool</text><text x="8" y="11.8" font-family="Liberation Sans" font-weight="bold" font-size="4" fill="#5a7090" text-anchor="middle" font-style="italic">Control</text><circle cx="7.6" cy="7.2" r="0.9" fill="#2b8fc4"/><circle cx="9.6" cy="7.2" r="0.9" fill="#2b8fc4"/></svg></div><div class="c src">poolcontrol.0</div><div class="c tm">2025-11-01 03:48:04.835</div><div class="c lv">info</div><div class="c msg" style="letter-spacing:0.298px">statisticsHelperMonth: Monatsstatistik wird zurückgesetzt.</div></div>
<div id="sb"><div id="thumb"></div></div>
</div>
</body></html>
